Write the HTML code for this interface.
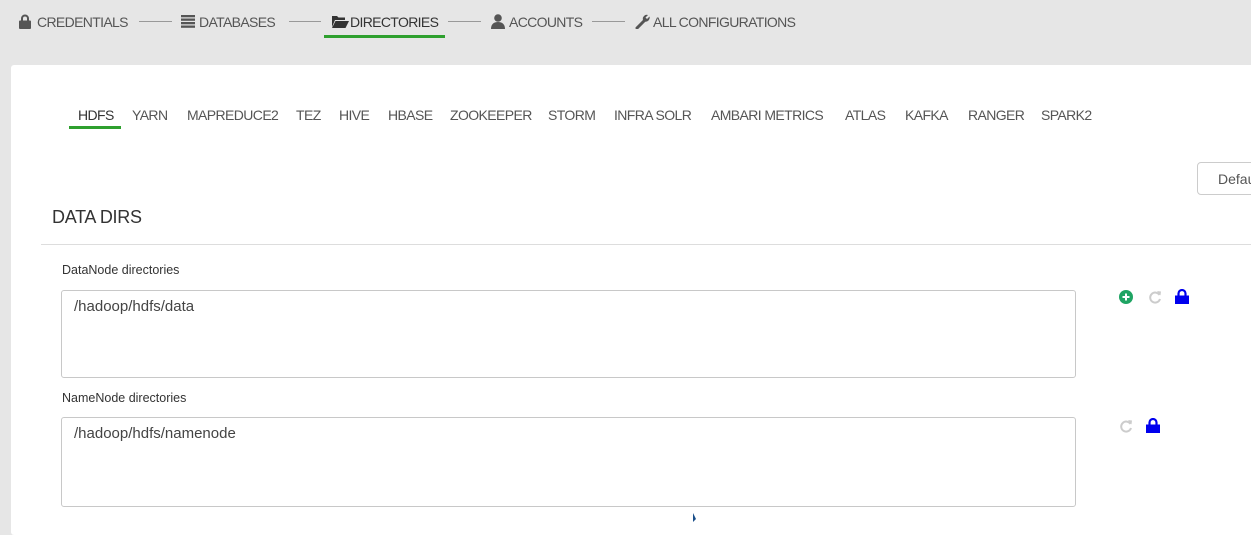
<!DOCTYPE html>
<html><head><style>
body{margin:0;width:1251px;height:521px;background:#e6e6e6;overflow:hidden;position:relative;font-family:"Liberation Sans",sans-serif;}
.a{position:absolute;white-space:nowrap}
.nav{top:14px;font-size:14px;color:#555;letter-spacing:-0.65px}
.ln{position:absolute;top:21px;height:1px;background:#999}
.panel{position:absolute;left:11px;top:65px;width:1260px;height:470px;background:#fff;border-radius:3px}
.tab{top:107px;font-size:14px;color:#555;letter-spacing:-0.6px}
.ta{position:absolute;left:61px;width:1013px;border:1px solid #c8c8c8;border-radius:3px;background:#fff}
.ta span{position:absolute;left:12px;top:7px;font-size:15px;color:#444}
.lbl{font-size:12.5px;color:#333}
</style></head><body>
<svg class="a" style="left:19px;top:14px" width="12" height="15" viewBox="0 0 12 15"><path d="M3 7V4.5a3 3 0 0 1 6 0V7" fill="none" stroke="#555" stroke-width="2"/><rect x="0" y="6.5" width="12" height="8.5" rx="1" fill="#555"/></svg>
<span class="a nav" style="left:37px">CREDENTIALS</span>
<div class="ln" style="left:139px;width:33px"></div>
<svg class="a" style="left:181px;top:15px" width="14" height="13"><rect y="0" width="14" height="2.3" fill="#555"/><rect y="3.5" width="14" height="2.3" fill="#555"/><rect y="7" width="14" height="2.3" fill="#555"/><rect y="10.5" width="14" height="2.3" fill="#555"/></svg>
<span class="a nav" style="left:199px">DATABASES</span>
<div class="ln" style="left:289px;width:32px"></div>
<svg class="a" style="left:332px;top:15px" width="17" height="13"><path d="M0 1h5l1.5 1.5H13V5H3L0 12z" fill="#333"/><path d="M3.5 6H17L13.5 13H0z" fill="#333"/></svg>
<span class="a nav" style="left:350px;color:#333">DIRECTORIES</span>
<div class="a" style="left:324px;top:35px;width:121px;height:3px;background:#2ea02e"></div>
<div class="ln" style="left:448px;width:33px"></div>
<svg class="a" style="left:491px;top:14px" width="14" height="15"><circle cx="7" cy="4" r="3.8" fill="#555"/><path d="M0 15c0-5 3-7 7-7s7 2 7 7z" fill="#555"/></svg>
<span class="a nav" style="left:509px">ACCOUNTS</span>
<div class="ln" style="left:592px;width:33px"></div>
<svg class="a" style="left:635px;top:14px" width="15" height="15"><path d="M2 14L9 7" stroke="#555" stroke-width="3" stroke-linecap="round"/><path d="M8 6a4 4 0 0 1 5-5l-2.5 2.5 1.5 1.5 2.5-2.5a4 4 0 0 1-5 5z" fill="#555"/></svg>
<span class="a nav" style="left:653px">ALL CONFIGURATIONS</span>

<div class="panel"></div>
<span class="a tab" style="left:78px;color:#333">HDFS</span>
<div class="a" style="left:69px;top:126px;width:52px;height:3px;background:#2ea02e"></div>
<span class="a tab" style="left:132px">YARN</span>
<span class="a tab" style="left:187px">MAPREDUCE2</span>
<span class="a tab" style="left:296px">TEZ</span>
<span class="a tab" style="left:339px">HIVE</span>
<span class="a tab" style="left:388px">HBASE</span>
<span class="a tab" style="left:450px">ZOOKEEPER</span>
<span class="a tab" style="left:548px">STORM</span>
<span class="a tab" style="left:614px">INFRA SOLR</span>
<span class="a tab" style="left:711px">AMBARI METRICS</span>
<span class="a tab" style="left:845px">ATLAS</span>
<span class="a tab" style="left:905px">KAFKA</span>
<span class="a tab" style="left:968px">RANGER</span>
<span class="a tab" style="left:1041px">SPARK2</span>

<div class="a" style="left:1197px;top:162px;width:80px;height:31px;border:1px solid #ccc;border-radius:4px;background:#fff"><span style="position:absolute;left:20px;top:8px;font-size:14px;color:#555">Default</span></div>
<span class="a" style="left:52px;top:207px;font-size:18px;color:#333;letter-spacing:-0.3px">DATA DIRS</span>
<div class="a" style="left:41px;top:244px;width:1220px;height:1px;background:#ddd"></div>

<span class="a lbl" style="left:62px;top:263px">DataNode directories</span>
<div class="ta" style="top:290px;height:86px"><span>/hadoop/hdfs/data</span></div>
<svg class="a" style="left:1119px;top:290px" width="14" height="14"><circle cx="7" cy="7" r="7" fill="#1fa463"/><path d="M7 3.5v7M3.5 7h7" stroke="#fff" stroke-width="2"/></svg>
<svg class="a" style="left:1148px;top:290px" width="14" height="14"><path d="M11.5 5A5 5 0 1 0 12 9" fill="none" stroke="#ccc" stroke-width="2"/><path d="M9 1l4 .5-.5 4z" fill="#ccc"/></svg>
<svg class="a" style="left:1175px;top:289px" width="14" height="15"><path d="M3.5 7V4.5a3.5 3.5 0 0 1 7 0V7" fill="none" stroke="#0000ee" stroke-width="2.2"/><rect y="6.5" width="14" height="8.5" fill="#0000ee"/></svg>

<span class="a lbl" style="left:62px;top:391px">NameNode directories</span>
<div class="ta" style="top:417px;height:88px"><span>/hadoop/hdfs/namenode</span></div>
<svg class="a" style="left:1119px;top:419px" width="14" height="14"><path d="M11.5 5A5 5 0 1 0 12 9" fill="none" stroke="#ccc" stroke-width="2"/><path d="M9 1l4 .5-.5 4z" fill="#ccc"/></svg>
<svg class="a" style="left:1146px;top:418px" width="14" height="15"><path d="M3.5 7V4.5a3.5 3.5 0 0 1 7 0V7" fill="none" stroke="#0000ee" stroke-width="2.2"/><rect y="6.5" width="14" height="8.5" fill="#0000ee"/></svg>
<svg class="a" style="left:692px;top:512px" width="10" height="10"><path d="M1 1v9l3-3z" fill="#1a4f8a"/></svg>
</body></html>
